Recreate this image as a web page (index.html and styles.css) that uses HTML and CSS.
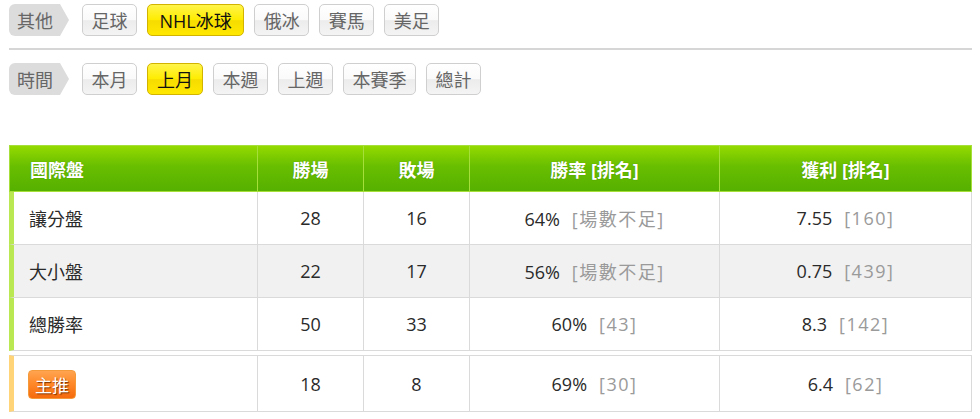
FILE: index.html
```html
<!DOCTYPE html>
<html lang="zh-Hant">
<head>
<meta charset="utf-8">
<link rel="stylesheet" href="styles.css">
</head>
<body>
<div class="page">
  <div class="filter-row">
    <span class="tag">其他</span>
    <div class="btns">
      <span class="btn">足球</span>
      <span class="btn active latin">NHL冰球</span>
      <span class="btn">俄冰</span>
      <span class="btn">賽馬</span>
      <span class="btn">美足</span>
    </div>
  </div>
  <div class="sep"></div>
  <div class="filter-row">
    <span class="tag">時間</span>
    <div class="btns">
      <span class="btn">本月</span>
      <span class="btn active">上月</span>
      <span class="btn">本週</span>
      <span class="btn">上週</span>
      <span class="btn">本賽季</span>
      <span class="btn">總計</span>
    </div>
  </div>

  <table class="stats main">
    <colgroup>
      <col class="c1"><col class="c2"><col class="c3"><col class="c4"><col class="c5">
    </colgroup>
    <thead>
      <tr>
        <th class="first">國際盤</th>
        <th>勝場</th>
        <th>敗場</th>
        <th>勝率 [排名]</th>
        <th>獲利 [排名]</th>
      </tr>
    </thead>
    <tbody>
      <tr>
        <td class="first">讓分盤</td>
        <td>28</td>
        <td>16</td>
        <td>64%<span class="rank">[場數不足]</span></td>
        <td>7.55<span class="rank">[160]</span></td>
      </tr>
      <tr class="alt">
        <td class="first">大小盤</td>
        <td>22</td>
        <td>17</td>
        <td>56%<span class="rank">[場數不足]</span></td>
        <td>0.75<span class="rank">[439]</span></td>
      </tr>
      <tr>
        <td class="first">總勝率</td>
        <td>50</td>
        <td>33</td>
        <td>60%<span class="rank">[43]</span></td>
        <td>8.3<span class="rank">[142]</span></td>
      </tr>
    </tbody>
  </table>

  <table class="stats promo">
    <colgroup>
      <col class="c1"><col class="c2"><col class="c3"><col class="c4"><col class="c5">
    </colgroup>
    <tbody>
      <tr>
        <td class="first"><span class="badge">主推</span></td>
        <td>18</td>
        <td>8</td>
        <td>69%<span class="rank">[30]</span></td>
        <td>6.4<span class="rank">[62]</span></td>
      </tr>
    </tbody>
  </table>
</div>
</body>
</html>
```
FILE: styles.css
```css
html, body {
  margin: 0;
  padding: 0;
  background: #fff;
}
body {
  font-family: "Open Sans", "Noto Sans CJK TC", sans-serif;
  color: #333;
}
.page {
  padding: 4px 8px 0 9px;
}
.filter-row {
  display: flex;
  align-items: center;
  height: 32px;
}
.tag {
  box-sizing: border-box;
  width: 60px;
  height: 32px;
  padding-left: 8px;
  display: flex;
  align-items: center;
  font-size: 18px;
  color: #666;
  background: #dcdcdc;
  border-radius: 6px 0 0 6px;
  clip-path: polygon(0 0, 51px 0, 60px 50%, 51px 100%, 0 100%);
  font-family: "Noto Sans CJK TC", sans-serif;
}
.btns {
  display: flex;
  gap: 10px;
  margin-left: 13px;
}
.btn {
  box-sizing: border-box;
  height: 32px;
  padding: 0 8.5px;
  display: flex;
  align-items: center;
  font-size: 18px;
  color: #666;
  border: 1px solid #cfcfcf;
  border-radius: 5px;
  background: linear-gradient(#ffffff 0%, #fafafa 50%, #ececec 52%, #f4f4f4 100%);
  font-family: "Noto Sans CJK TC", sans-serif;
}
.btn.active {
  color: #111;
  border-color: #d2b400;
  background: linear-gradient(#fff44a 0%, #ffec00 50%, #f7dc00 52%, #ffe800 100%);
  padding: 0 9px;
}
.btn.latin {
  font-family: "Open Sans", "Noto Sans CJK TC", sans-serif;
  padding: 0 11.5px;
}
.sep {
  height: 0;
  border-top: 2px solid #d6d6d6;
  margin: 12px 0 13px 0;
}
.stats {
  width: 963px;
  border-collapse: separate;
  border-spacing: 0;
  table-layout: fixed;
}
.main {
  margin-top: 50px;
}
.c1 { width: 249px; }
.c2 { width: 106px; }
.c3 { width: 106px; }
.c4 { width: 250px; }
.c5 { width: 252px; }
.stats th {
  box-sizing: border-box;
  height: 47px;
  padding: 0;
  color: #fff;
  font-size: 18px;
  font-weight: bold;
  text-align: center;
  background: linear-gradient(#94da00 0%, #68be00 45%, #56b000 100%);
  border-top: 1px solid #a6de3a;
  border-right: 1px solid #a6de3a;
  border-bottom: 1px solid #a6de3a;
  text-shadow: 0 0 1px rgba(40, 90, 0, 0.5);
}
.stats th.first {
  text-align: left;
  padding-left: 20px;
  border-left: 1px solid #a6de3a;
}
.stats td {
  box-sizing: border-box;
  height: 53px;
  padding: 0;
  font-size: 18px;
  text-align: center;
  border-right: 1px solid #dadada;
  border-bottom: 1px solid #dadada;
  color: #2a2a2a;
}
.stats td.first {
  text-align: left;
  padding-left: 15px;
  border-left: 5px solid #b9e853;
  font-family: "Noto Sans CJK TC", sans-serif;
}
.stats tr.alt td {
  background: #f1f1f1;
}
.rank {
  color: #9a9a9a;
  margin-left: 12px;
  letter-spacing: 1.5px;
}
.promo {
  margin-top: 4px;
}
.promo td {
  height: 57px;
  border-top: 1px solid #dadada;
}
.promo td.first {
  border-left-color: #ffd377;
  padding-left: 14px;
}
.badge {
  display: inline-flex;
  align-items: center;
  justify-content: center;
  box-sizing: border-box;
  width: 48px;
  height: 29px;
  border: 1px solid #f59a3a;
  border-radius: 4px;
  background: linear-gradient(#ffa450 0%, #ff8a2a 45%, #f56a0c 100%);
  color: #fff;
  font-size: 17px;
  letter-spacing: 0;
  text-shadow: 1px 1px 1px #7a3000;
  vertical-align: middle;
}
```
